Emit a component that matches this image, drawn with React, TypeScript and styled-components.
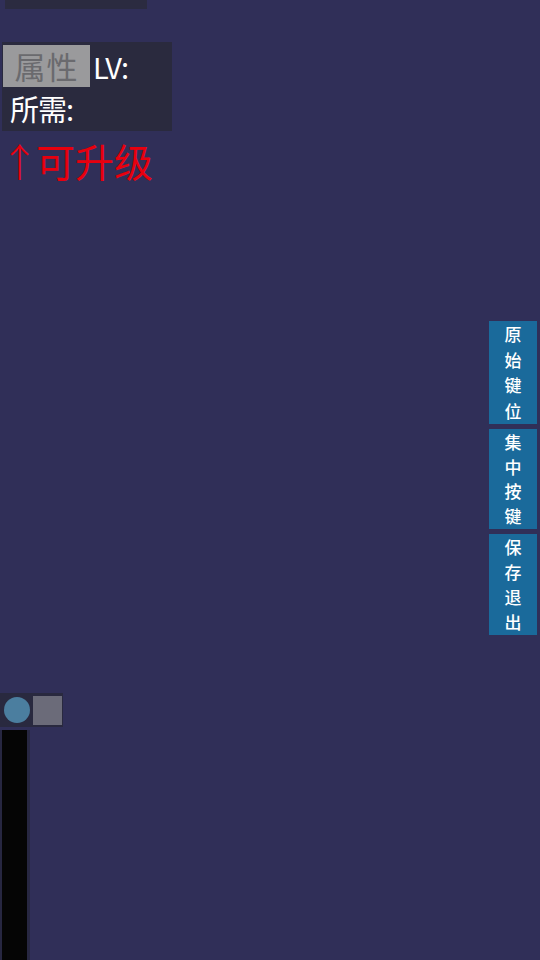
import styled, { createGlobalStyle } from 'styled-components';

const GlobalStyle = createGlobalStyle`
    html, body {
        margin: 0;
        padding: 0;
        background-color: #302f58;
        font-family: "Noto Sans CJK SC", "Noto Sans", sans-serif;
    }
`;

const Screen = styled.div`
    display: flex;
    justify-content: space-between;
    width: 540px;
    height: 960px;
    overflow: hidden;
`;

const LeftColumn = styled.div`
    display: flex;
    flex-direction: column;
    align-items: flex-start;
`;

const TopBar = styled.div`
    margin-left: 5px;
    width: 142px;
    height: 9px;
    background-color: #2b2b40;
`;

const StatPanel = styled.div`
    margin-top: 33px;
    margin-left: 2px;
    width: 170px;
    height: 89px;
    padding-top: 3px;
    box-sizing: border-box;
    background-color: #2a2a3e;
    display: flex;
    flex-direction: column;
`;

const StatRow = styled.div`
    display: flex;
    align-items: center;
    height: 42px;
`;

const TabLabel = styled.div`
    margin-left: 1px;
    width: 87px;
    height: 42px;
    background-color: #9a9a9c;
    color: #6a6a6e;
    font-size: 31px;
    line-height: 42px;
    text-align: center;
    letter-spacing: 1px;
`;

const StatText = styled.span<{ $indent?: number }>`
    margin-left: ${(p) => p.$indent ?? 3}px;
    color: #ffffff;
    font-size: 29px;
    line-height: 42px;
    letter-spacing: -1px;
`;

const Upgrade = styled.div`
    margin-top: 3px;
    color: #e8000e;
    font-size: 39px;
    line-height: 52px;
    white-space: nowrap;
`;

const Arrow = styled.span`
    display: inline-block;
    width: 36px;
    font-weight: 300;
`;

const Spacer = styled.div`
    flex: 1;
`;

const Controls = styled.div`
    display: flex;
    align-items: center;
    gap: 3px;
    width: 63px;
    height: 34px;
    padding: 0 1px 0 4px;
    box-sizing: border-box;
    background-color: #29293f;
`;

const Knob = styled.div`
    width: 26px;
    height: 26px;
    border-radius: 50%;
    background-color: #4b7e9f;
`;

const Square = styled.div`
    width: 29px;
    height: 29px;
    background-color: #6b6b79;
`;

const BarTrack = styled.div`
    margin-top: 3px;
    width: 30px;
    height: 230px;
    padding: 0 3px 0 2px;
    box-sizing: border-box;
    background-color: #272741;
`;

const BarFill = styled.div`
    width: 100%;
    height: 100%;
    background-color: #050505;
`;

const RightColumn = styled.div`
    display: flex;
    flex-direction: column;
    gap: 5px;
    padding-top: 321px;
    padding-right: 3px;
`;

const SideButton = styled.button<{ $height: number }>`
    display: flex;
    flex-direction: column;
    align-items: center;
    justify-content: space-between;
    width: 48px;
    height: ${(p) => p.$height}px;
    padding: 1px 0;
    box-sizing: border-box;
    border: none;
    background-color: #1a6a9b;
    color: #ffffff;
    font-family: inherit;
    font-size: 17px;
    font-weight: 500;
    line-height: 24px;
    cursor: pointer;
`;

const buttons = [
    { label: '原始键位', height: 103 },
    { label: '集中按键', height: 100 },
    { label: '保存退出', height: 101 },
];

export default function App() {
    return (
        <>
            <GlobalStyle />
            <Screen>
                <LeftColumn>
                    <TopBar />
                    <StatPanel>
                        <StatRow>
                            <TabLabel>属性</TabLabel>
                            <StatText>LV:</StatText>
                        </StatRow>
                        <StatRow>
                            <StatText $indent={8}>所需:</StatText>
                        </StatRow>
                    </StatPanel>
                    <Upgrade>
                        <Arrow>↑</Arrow>可升级
                    </Upgrade>
                    <Spacer />
                    <Controls>
                        <Knob />
                        <Square />
                    </Controls>
                    <BarTrack>
                        <BarFill />
                    </BarTrack>
                </LeftColumn>
                <RightColumn>
                    {buttons.map((b) => (
                        <SideButton key={b.label} $height={b.height}>
                            {b.label.split('').map((ch, i) => (
                                <span key={i}>{ch}</span>
                            ))}
                        </SideButton>
                    ))}
                </RightColumn>
            </Screen>
        </>
    );
}
